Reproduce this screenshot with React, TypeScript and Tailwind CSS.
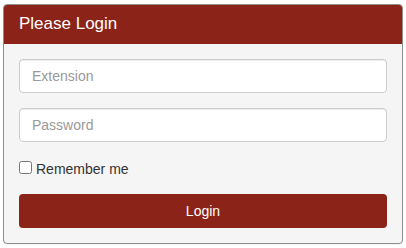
export default function App() {
  return (
    <div className="min-h-screen bg-white pl-[3px] pt-[4px] font-['Liberation_Sans',Arial,sans-serif]">
      <div className="w-[400px] overflow-hidden rounded-[4px] border border-[#8e8e8e] bg-[#f5f5f5] shadow-[0_1px_1px_rgba(0,0,0,0.05)]">
        {/* Heading */}
        <div className="h-[39px] bg-[#8b2318] px-[15px] pt-[9px]">
          <h3 className="text-[17px] leading-[19px] text-white">Please Login</h3>
        </div>

        {/* Body */}
        <form className="flex flex-col p-[15px]" onSubmit={(e) => e.preventDefault()}>
          <input
            type="text"
            placeholder="Extension"
            className="h-[34px] w-full rounded-[4px] border border-[#ccc] bg-white px-[12px] text-[14px] text-[#555] shadow-[inset_0_1px_1px_rgba(0,0,0,0.075)] outline-none placeholder:text-[#999]"
          />
          <input
            type="password"
            placeholder="Password"
            className="mt-[15px] h-[34px] w-full rounded-[4px] border border-[#ccc] bg-white px-[12px] text-[14px] text-[#555] shadow-[inset_0_1px_1px_rgba(0,0,0,0.075)] outline-none placeholder:text-[#999]"
          />
          <label className="mt-[17px] flex h-[20px] items-start gap-[4px] text-[14px] leading-[20px] text-[#333]">
            <input type="checkbox" className="m-0 mt-[2px] h-[13px] w-[13px]" />
            <span>Remember me</span>
          </label>
          <button
            type="submit"
            className="mt-[15px] h-[34px] w-full rounded-[4px] bg-[#8b2318] text-[14px] text-white"
          >
            Login
          </button>
        </form>
      </div>
    </div>
  );
}
